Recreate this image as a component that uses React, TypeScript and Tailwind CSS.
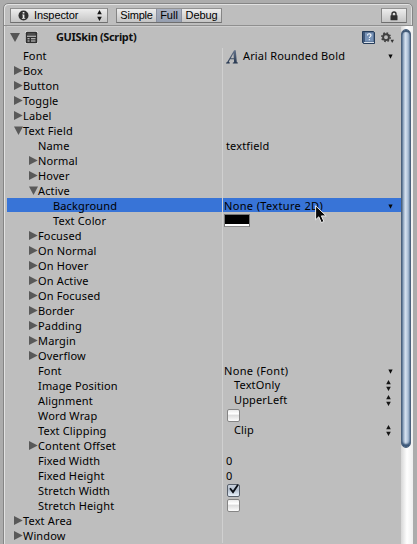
import type { ReactNode } from "react";

type Row = {
  label: string;
  depth: number;
  fold?: "open" | "closed";
  value?: ReactNode;
  selected?: boolean;
};

const Down = ({ className = "" }: { className?: string }) => (
  <svg className={className} width="5" height="5" viewBox="0 0 5 5">
    <path d="M.4.5h4.2L2.5 4.7z" fill="#080808" />
  </svg>
);

const UpDown = ({ className = "" }: { className?: string }) => (
  <svg className={className} width="5" height="11" viewBox="0 0 5 11">
    <path d="M.2 4.3h4.6L2.5 0zM.2 6.7h4.6L2.5 11z" fill="#151515" />
  </svg>
);

const ObjectValue = ({ text }: { text: string }) => (
  <div className="flex h-full items-center pl-[1px] pr-[8px]">
    <span className="grow tracking-[0.35px]">{text}</span>
    <Down className="mt-[2px]" />
  </div>
);

const EnumValue = ({ text }: { text: string }) => (
  <div className="flex h-[13px] items-center pl-[11px] pr-[10px]">
    <span className="grow">{text}</span>
    <UpDown className="mt-[2px]" />
  </div>
);

const Check = ({ on = false }: { on?: boolean }) => (
  <div className="pl-[4px] pt-[1px]">
    <svg className="block" width="13" height="13" viewBox="0 0 13 13">
      <defs>
        <linearGradient id="box" x2="0" y2="1">
          <stop stopColor="#e8e8e8" />
          <stop offset=".35" stopColor="#fff" />
          <stop offset=".5" stopColor="#dedede" />
          <stop offset="1" stopColor="#fff" />
        </linearGradient>
        <linearGradient id="boxOn" x2="0" y2="1">
          <stop stopColor="#cbd2dc" />
          <stop offset=".45" stopColor="#b3bfce" />
          <stop offset="1" stopColor="#edf6ff" />
        </linearGradient>
      </defs>
      <rect x=".5" y=".5" width="12" height="12" rx="1.5" fill={on ? "url(#boxOn)" : "url(#box)"} stroke={on ? "#59616c" : "#858585"} />
      {on && <path d="M3 4.2l3 3.9L11 .8" fill="none" stroke="#0c1017" strokeWidth="1.8" />}
    </svg>
  </div>
);

const Plain = ({ text }: { text: string }) => <div className="pl-[3px]">{text}</div>;

const rows: Row[] = [
  {
    label: "Font",
    depth: 0,
    value: (
      <div className="flex h-full items-center pl-[3px] pr-[8px]">
        <svg width="12" height="14" viewBox="0 0 12 14" className="mt-[2px]">
          <defs>
            <linearGradient id="fontMark" x2="0" y2="1">
              <stop stopColor="#66758d" />
              <stop offset="1" stopColor="#25364f" />
            </linearGradient>
          </defs>
          <path fillRule="evenodd" d="M8.1.2h1.7l1 12 1.1.4-.2.8H6.7l.2-.8 1.2-.4-.2-2.9H4.1l-1.4 2.8 1.2.5-.2.8H0l.2-.8.9-.4zM7.5 3.2L4.8 8.3h3z" fill="url(#fontMark)" />
        </svg>
        <span className="grow pl-[5px]">Arial Rounded Bold</span>
        <Down className="mt-[2px]" />
      </div>
    ),
  },
  { label: "Box", depth: 0, fold: "closed" },
  { label: "Button", depth: 0, fold: "closed" },
  { label: "Toggle", depth: 0, fold: "closed" },
  { label: "Label", depth: 0, fold: "closed" },
  { label: "Text Field", depth: 0, fold: "open" },
  { label: "Name", depth: 1, value: <Plain text="textfield" /> },
  { label: "Normal", depth: 1, fold: "closed" },
  { label: "Hover", depth: 1, fold: "closed" },
  { label: "Active", depth: 1, fold: "open" },
  { label: "Background", depth: 2, selected: true, value: <ObjectValue text="None (Texture 2D)" /> },
  {
    label: "Text Color",
    depth: 2,
    value: (
      <div className="pl-[1px] pt-[1px]">
        <div className="h-[13px] w-[26px] border border-[#777] border-b-[#8b8b8b] bg-white">
          <div className="h-[9px] bg-black" />
        </div>
      </div>
    ),
  },
  { label: "Focused", depth: 1, fold: "closed" },
  { label: "On Normal", depth: 1, fold: "closed" },
  { label: "On Hover", depth: 1, fold: "closed" },
  { label: "On Active", depth: 1, fold: "closed" },
  { label: "On Focused", depth: 1, fold: "closed" },
  { label: "Border", depth: 1, fold: "closed" },
  { label: "Padding", depth: 1, fold: "closed" },
  { label: "Margin", depth: 1, fold: "closed" },
  { label: "Overflow", depth: 1, fold: "closed" },
  { label: "Font", depth: 1, value: <ObjectValue text="None (Font)" /> },
  { label: "Image Position", depth: 1, value: <EnumValue text="TextOnly" /> },
  { label: "Alignment", depth: 1, value: <EnumValue text="UpperLeft" /> },
  { label: "Word Wrap", depth: 1, value: <Check /> },
  { label: "Text Clipping", depth: 1, value: <EnumValue text="Clip" /> },
  { label: "Content Offset", depth: 1, fold: "closed" },
  { label: "Fixed Width", depth: 1, value: <Plain text="0" /> },
  { label: "Fixed Height", depth: 1, value: <Plain text="0" /> },
  { label: "Stretch Width", depth: 1, value: <Check on /> },
  { label: "Stretch Height", depth: 1, value: <Check /> },
  { label: "Text Area", depth: 0, fold: "closed" },
  { label: "Window", depth: 0, fold: "closed" },
];

const indents = ["pl-[7px]", "pl-[22px]", "pl-[37px]"];

function PropertyRow({ row }: { row: Row }) {
  return (
    <div className="h-[15px] shrink-0">
      <div className={`flex h-[14px] ${row.selected ? "bg-[#3874d7]" : ""}`}>
        <div className={`flex w-[215px] shrink-0 ${indents[row.depth]}`}>
          <div className="w-[9px] shrink-0 pt-[3px]">
            {row.fold && (
              <svg className="block" width="9" height="10" viewBox="0 0 9 10">
                <path d={row.fold === "open" ? "M0 .5h9L4.5 9z" : "M0 0v9L8.7 4.5z"} fill="#595959" />
              </svg>
            )}
          </div>
          <span>{row.label}</span>
        </div>
        <div className="h-[15px] min-w-0 grow border-l border-[#d0d0d0]">{row.value}</div>
      </div>
    </div>
  );
}

const button = "border border-[#858585] border-t-[#929292] border-b-[#6f6f6f] bg-linear-to-b from-[#ededed] via-[#d9d9d9] to-[#c5c5c5]";

export default function App() {
  return (
    <div className="relative h-[544px] w-[417px] overflow-hidden bg-[#acacac] pl-[3px] pr-[4px] pt-[3px] font-['Noto_Sans','Open_Sans',sans-serif] text-[11px] leading-[15px] tracking-[0.15px] text-black">
      <div className="flex h-[545px] flex-col rounded-t-[5px] border border-[#858585] bg-[#bebebe] shadow-[inset_1px_1px_0_#e2e2e2,inset_-1px_0_0_#dedede]">
        <div className="flex h-[22px] shrink-0 items-end border-b border-[#8f8f8f] pb-[2px] pl-[6px] pr-[5px] font-['Liberation_Sans',sans-serif] text-[11px] tracking-normal">
          <div className={`flex h-[15px] w-[98px] items-center pl-[7px] pr-[5px] ${button}`}>
            <svg width="11" height="11" viewBox="0 0 11 11">
              <circle cx="5.5" cy="5.5" r="5" fill="#303030" />
              <path d="M4.2 4.4h2.2v3.5h.8v.9H3.9v-.9h.8V5.2h-.5zM4.7 1.9h1.7v1.5H4.7z" fill="#eee" />
            </svg>
            <span className="grow pl-[5px] tracking-[-0.1px]">Inspector</span>
            <UpDown />
          </div>
          <div className={`ml-[8px] flex h-[15px] w-[106px] leading-[13px] ${button}`}>
            <span className="w-[39px] text-center tracking-[-0.2px]">Simple</span>
            <span className="w-[26px] border-x border-[#8b91a0] bg-linear-to-b from-[#aab1c1] to-[#959eaf] text-center">Full</span>
            <span className="grow text-center tracking-[-0.1px]">Debug</span>
          </div>
          <div className={`ml-auto flex h-[15px] w-[26px] items-center justify-center ${button}`}>
            <svg width="8" height="10" viewBox="0 0 8 10">
              <path d="M2 5V3a2 2 0 0 1 4 0v2" fill="none" stroke="#303030" strokeWidth="1.4" />
              <rect x=".5" y="4.3" width="7" height="5" rx=".5" fill="#303030" />
            </svg>
          </div>
        </div>
        <div className="flex h-[520px] pl-[3px]">
          <div className="flex w-[394px] shrink-0 flex-col">
            <div className="flex h-[22px] shrink-0 items-center border-t border-[#cecece] pl-[3px] pr-[6px]">
              <svg width="10" height="9" viewBox="0 0 10 9"><path d="M0 0h10L5 9z" fill="#555" /></svg>
              <svg className="ml-[5px]" width="13" height="13" viewBox="0 0 13 13">
                <rect width="13" height="13" rx="2" fill="#e2e2e2" />
                <rect x=".7" y=".7" width="11.6" height="11.6" rx="1.5" fill="#303030" />
                <path d="M2.5 3h8" stroke="#696969" />
                <path d="M2 5.2h9" stroke="#ddd" />
                <path d="M2.5 7.2h2v1h-2zM2.5 9.4h2v1h-2zM6 7.2h4.5v1H6zM6 9.4h4.5v1H6z" fill="#d9d9d9" />
              </svg>
              <span className="grow pb-[2px] pl-[18px] text-[11px] font-bold tracking-[-0.35px] text-[#101010]">GUISkin (Script)</span>
              <svg width="13" height="13" viewBox="0 0 13 13">
                <path d="M.5.5h11l1 1v11h-11l-1-1z" fill="#405879" stroke="#263d5b" />
                <path d="M3 1.5h8.5v9.2H3z" fill="#7893b7" />
                <path d="M2 11.5h10" stroke="#d8e0e9" />
                <path d="M5.5 4.4c0-2.3 3.7-2 3.5 0-.1 1.2-1.7 1.2-1.7 2.7M7.3 8.1v1.2" fill="none" stroke="#f4f8fc" strokeWidth="1.1" />
              </svg>
              <svg className="ml-[6px]" width="14" height="12" viewBox="0 0 14 12">
                <circle cx="5" cy="5.2" r="2.9" fill="none" stroke="#404040" strokeWidth="1.9" />
                <circle cx="5" cy="5.2" r="4.2" fill="none" stroke="#404040" strokeWidth="1.6" strokeDasharray="1.65 1.65" />
                <path d="M9.5 7.7H13L11.2 11z" fill="#353535" />
              </svg>
            </div>
            {rows.map((row, index) => <PropertyRow key={index} row={row} />)}
          </div>
          <div className="w-[12px] shrink-0 bg-linear-to-r from-[#d7d7d7] via-white to-[#eee] pt-[3px]">
            <div className="h-[419px] w-[10px] rounded-full border border-[#4b617c] bg-linear-to-r from-[#7891ad] via-[#d6e2f0] via-45% to-[#8ba3bf] shadow-[inset_0_2px_1px_#38516e,inset_0_-3px_2px_#385476]" />
          </div>
        </div>
      </div>
      <svg className="absolute left-[315px] top-[205px]" width="12" height="19" viewBox="0 0 12 19">
        <path d="M.6.8v14l3.2-3 2.5 5.8 2.6-1.1-2.5-5.6h4.8z" fill="#080808" stroke="#eee" strokeWidth="1" />
      </svg>
    </div>
  );
}
